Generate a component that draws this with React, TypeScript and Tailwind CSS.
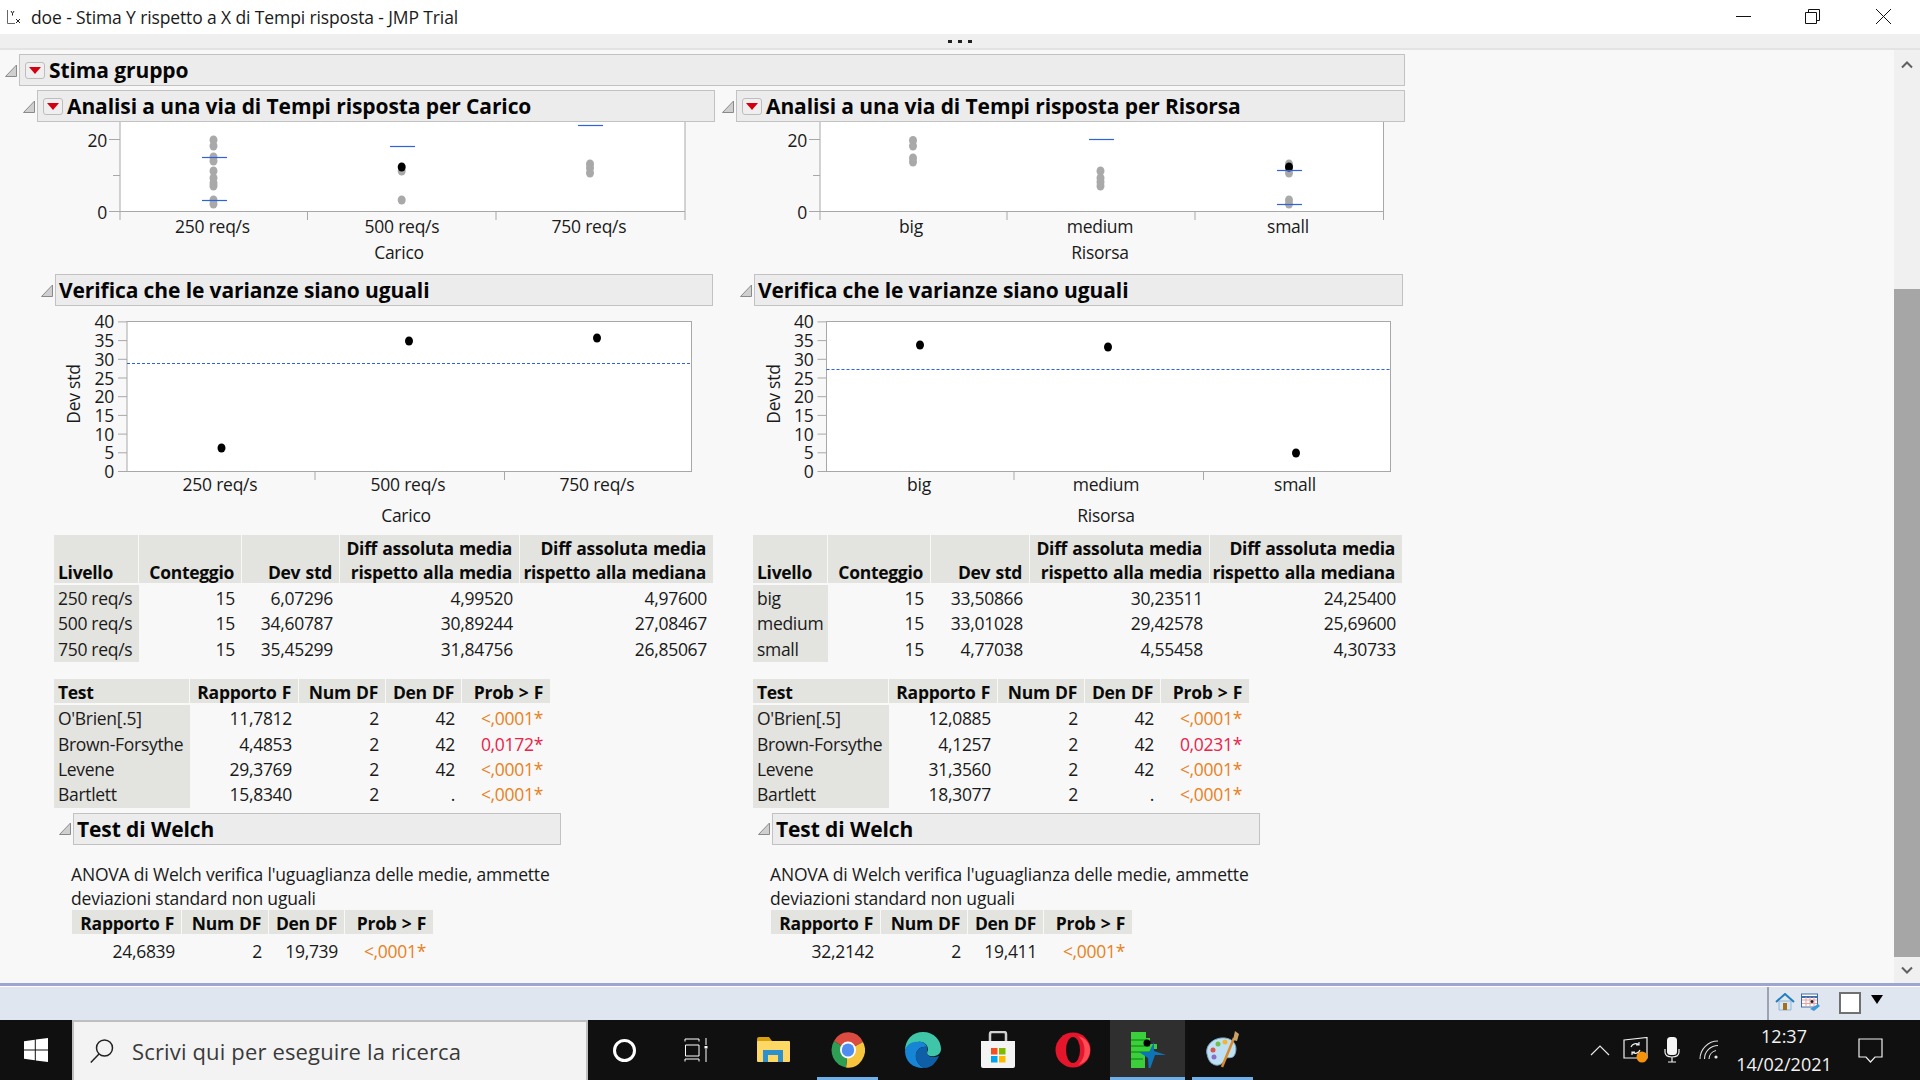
import React from 'react';

const FONT = "'Open Sans', 'Noto Sans', sans-serif";

type Marker = { x: number; y: number };
type Bar = { x1: number; x2: number; y: number };

const Disclosure = () => (
  <svg width="12" height="13" viewBox="0 0 12 13" className="shrink-0 mr-[2px]">
    <path d="M11.5 1 V12.5 H0.5 Z" fill="#cfcfcf" stroke="#8a8a8a" strokeWidth="1" />
  </svg>
);

const RedMenu = () => (
  <div className="w-[20px] h-[17px] shrink-0 mr-[4px] ml-[5px] rounded-[3px] border border-[#bdbdbd] bg-[#efefef] flex items-center justify-center">
    <svg width="12" height="7" viewBox="0 0 12 7">
      <path d="M0 0 H12 L6 7 Z" fill="#d40010" />
    </svg>
  </div>
);

const Header = ({ title, width, menu, className }: { title: string; width: string; menu?: boolean; className?: string }) => (
  <div className={`flex items-center ${className ?? ''}`}>
    <Disclosure />
    <div className={`h-[32px] ${width} flex items-center border border-[#c2c2c2] bg-[#ececec] text-[21px] font-bold text-[#050505] tracking-[-0.1px]`}>
      {menu && <RedMenu />}
      <span className={menu ? 'pt-[2px]' : 'ml-[3px] pt-[2px]'}>{title}</span>
    </div>
  </div>
);

const ScatterPlot = ({ x0, left, right, ticks, labels, labelX, axisName, axisX, gray, black, bars }: {
  x0: number; left: number; right: number; ticks: number[]; labels: string[]; labelX: number[];
  axisName: string; axisX: number; gray: Marker[]; black: Marker[]; bars: Bar[];
}) => (
  <svg width="699" height="144" viewBox={`${x0} 122 699 144`} className="block tracking-[-0.25px]" fontFamily={FONT} fontSize="17.5" fill="#1a1a1a">
    <rect x={left} y="122" width={right - left} height="89" fill="#fff" />
    <path d={`M${left} 122 V220 M${right} 122 V220 M${left} 211.5 H${right} M${ticks[0]} 211 V220 M${ticks[1]} 211 V220 M${left - 11} 139.5 H${left} M${left - 7} 175.5 H${left} M${left - 11} 211.5 H${left}`} stroke="#a8a8a8" strokeWidth="1" fill="none" />
    {gray.map((p, i) => <ellipse key={i} cx={p.x} cy={p.y} rx="4" ry="4.5" fill="#a9a9a9" />)}
    {black.map((p, i) => <ellipse key={i} cx={p.x} cy={p.y} rx="4" ry="4.5" fill="#000" />)}
    {bars.map((b, i) => <line key={i} x1={b.x1} x2={b.x2} y1={b.y} y2={b.y} stroke="#2f62e0" strokeWidth="1.2" />)}
    <text x={left - 13} y="147" textAnchor="end">20</text>
    <text x={left - 13} y="219" textAnchor="end">0</text>
    {labels.map((l, i) => <text key={l} x={labelX[i]} y="233" textAnchor="middle">{l}</text>)}
    <text x={axisX} y="258.5" textAnchor="middle">{axisName}</text>
  </svg>
);

const DevPlot = ({ x0, left, right, ticks, labels, labelX, axisName, axisX, points, dashY }: {
  x0: number; left: number; right: number; ticks: number[]; labels: string[]; labelX: number[];
  axisName: string; axisX: number; points: Marker[]; dashY: number;
}) => {
  const yTicks = [0, 5, 10, 15, 20, 25, 30, 35, 40];
  return (
    <svg width="699" height="229" viewBox={`${x0} 306 699 229`} className="block tracking-[-0.25px]" fontFamily={FONT} fontSize="17.5" fill="#1a1a1a">
      <rect x={left} y="321.5" width={right - left} height="150" fill="#fff" stroke="#a8a8a8" />
      {yTicks.map(t => {
        const y = 471.5 - t * 3.74;
        return (
          <g key={t}>
            <line x1={left - 9} x2={left} y1={y} y2={y} stroke="#a8a8a8" />
            <text x={left - 13} y={y + 6.5} textAnchor="end">{t}</text>
          </g>
        );
      })}
      <path d={`M${ticks[0]} 471 V480 M${ticks[1]} 471 V480`} stroke="#a8a8a8" />
      <line x1={left} x2={right} y1={dashY} y2={dashY} stroke="#2f62e0" strokeWidth="1.2" strokeDasharray="3 2" />
      {points.map((p, i) => <ellipse key={i} cx={p.x} cy={p.y} rx="4" ry="4.5" fill="#000" />)}
      {labels.map((l, i) => <text key={l} x={labelX[i]} y="491" textAnchor="middle">{l}</text>)}
      <text x={axisX} y="522" textAnchor="middle">{axisName}</text>
      <text x={left - 53} y="394" textAnchor="middle" transform={`rotate(-90 ${left - 53} 394)`} dy="6">Dev std</text>
    </svg>
  );
};

const DataTable = ({ cols, head, rows, headHeight, rowHeight, firstGray = true, probCol }: {
  cols: string; head: React.ReactNode[]; rows: string[][]; headHeight: string; rowHeight: string; firstGray?: boolean; probCol?: number;
}) => (
  <div className="text-[17.5px] text-[#1a1a1a] tracking-[-0.3px]">
    <div className={`grid ${cols} gap-x-[1px] ${headHeight}`}>
      {head.map((h, i) => (
        <div key={i} className={`bg-[#e3e3df] font-bold text-[#0a0a0a] leading-[24px] flex items-end [word-spacing:1px] whitespace-nowrap ${i === 0 && firstGray ? 'justify-start pl-[4px]' : 'justify-end text-right pr-[7px]'}`}>
          <span className="translate-y-[1px]">{h}</span>
        </div>
      ))}
    </div>
    <div className="mt-[2px]">
      {rows.map((r, ri) => (
        <div key={ri} className={`grid ${cols} gap-x-[1px] ${rowHeight}`}>
          {r.map((c, i) => {
            const isProb = i === probCol;
            const color = isProb ? (c.startsWith('<') ? 'text-[#e8811c]' : 'text-[#e8234a]') : '';
            return (
              <div key={i} className={`flex items-center whitespace-nowrap ${i === 0 && firstGray ? 'bg-[#e3e3df] justify-start pl-[4px] -mr-[1px]' : `justify-end ${isProb ? 'pr-[7px]' : 'pr-[6px]'}`} ${color}`}>
                {c}
              </div>
            );
          })}
        </div>
      ))}
    </div>
  </div>
);

type ColumnProps = {
  x0: number;
  title: string;
  subWidth: string;
  verWidth: string;
  levelCols: string;
  scatter: React.ComponentProps<typeof ScatterPlot>;
  dev: React.ComponentProps<typeof DevPlot>;
  levels: string[][];
  tests: string[][];
  welch: string[];
};

const LEVEL_HEAD = ['Livello', 'Conteggio', 'Dev std',
  <>Diff assoluta media<br />rispetto alla media</>,
  <>Diff assoluta media<br />rispetto alla mediana</>];

const OnewayColumn = ({ title, subWidth, verWidth, levelCols, scatter, dev, levels, tests, welch }: ColumnProps) => (
  <div className="w-[699px] shrink-0">
    <Header title={title} width={subWidth} menu />
    <ScatterPlot {...scatter} />
    <Header title="Verifica che le varianze siano uguali" width={verWidth} className="mt-[8px] ml-[18px]" />
    <DevPlot {...dev} />
    <div className="ml-[31px]">
      <DataTable cols={levelCols} head={LEVEL_HEAD} rows={levels} headHeight="h-[48px]" rowHeight="h-[25.4px]" />
      <div className="mt-[18px]">
        <DataTable
          cols="grid-cols-[135px_108px_86px_75px_88px]"
          head={['Test', 'Rapporto F', 'Num DF', 'Den DF', 'Prob > F']}
          rows={tests}
          headHeight="h-[24px]"
          rowHeight="h-[25.4px]"
          probCol={4}
        />
      </div>
    </div>
    <Header title="Test di Welch" width="w-[488px]" className="mt-[6px] ml-[36px]" />
    <p className="ml-[48px] mt-[17px] w-[500px] text-[17.5px] leading-[24px] text-[#1a1a1a] tracking-[-0.18px]">
      ANOVA di Welch verifica l'uguaglianza delle medie, ammette deviazioni standard non uguali
    </p>
    <div className="ml-[49px]">
      <DataTable
        cols="grid-cols-[109px_86px_75px_88px]"
        head={['Rapporto F', 'Num DF', 'Den DF', 'Prob > F']}
        rows={[welch]}
        headHeight="h-[24px]"
        rowHeight="h-[31px]"
        firstGray={false}
        probCol={3}
      />
    </div>
  </div>
);

const carico: ColumnProps = {
  x0: 23,
  title: 'Analisi a una via di Tempi risposta per Carico',
  subWidth: 'w-[678px]',
  verWidth: 'w-[658px]',
  levelCols: 'grid-cols-[84px_102px_97px_179px_193px]',
  scatter: {
    x0: 23, left: 120, right: 685, ticks: [307.5, 496], labels: ['250 req/s', '500 req/s', '750 req/s'], labelX: [212.5, 402, 589],
    axisName: 'Carico', axisX: 399,
    gray: [140, 146, 157, 161, 171, 178, 183, 186, 200, 204].map(y => ({ x: 213.5, y }))
      .concat([171, 200].map(y => ({ x: 401.7, y })))
      .concat([164, 168, 173].map(y => ({ x: 590, y }))),
    black: [{ x: 401.7, y: 167 }],
    bars: [{ x1: 202, x2: 227, y: 157.5 }, { x1: 202, x2: 227, y: 200.5 }, { x1: 390, x2: 415, y: 146.5 }, { x1: 578, x2: 603, y: 125.5 }],
  },
  dev: {
    x0: 23, left: 127, right: 691.5, ticks: [315, 504.5], labels: ['250 req/s', '500 req/s', '750 req/s'], labelX: [220, 408, 597],
    axisName: 'Carico', axisX: 406, dashY: 363.5,
    points: [{ x: 221.5, y: 448 }, { x: 409, y: 341 }, { x: 597, y: 338 }],
  },
  levels: [
    ['250 req/s', '15', '6,07296', '4,99520', '4,97600'],
    ['500 req/s', '15', '34,60787', '30,89244', '27,08467'],
    ['750 req/s', '15', '35,45299', '31,84756', '26,85067'],
  ],
  tests: [
    ["O'Brien[.5]", '11,7812', '2', '42', '<,0001*'],
    ['Brown-Forsythe', '4,4853', '2', '42', '0,0172*'],
    ['Levene', '29,3769', '2', '42', '<,0001*'],
    ['Bartlett', '15,8340', '2', '.', '<,0001*'],
  ],
  welch: ['24,6839', '2', '19,739', '<,0001*'],
};

const risorsa: ColumnProps = {
  x0: 722,
  title: 'Analisi a una via di Tempi risposta per Risorsa',
  subWidth: 'w-[669px]',
  verWidth: 'w-[649px]',
  levelCols: 'grid-cols-[74px_102px_98px_179px_192px]',
  scatter: {
    x0: 722, left: 820, right: 1383.5, ticks: [1007, 1195], labels: ['big', 'medium', 'small'], labelX: [911, 1100, 1288],
    axisName: 'Risorsa', axisX: 1100,
    gray: [140.5, 146, 158, 162].map(y => ({ x: 913, y }))
      .concat([171, 178, 182, 186].map(y => ({ x: 1100.5, y })))
      .concat([164, 168, 173, 200, 204].map(y => ({ x: 1289, y }))),
    black: [{ x: 1289, y: 167 }],
    bars: [{ x1: 1089, x2: 1114, y: 139.5 }, { x1: 1277, x2: 1302, y: 170.5 }, { x1: 1277, x2: 1302, y: 204.5 }],
  },
  dev: {
    x0: 722, left: 826.5, right: 1390.5, ticks: [1014, 1203.5], labels: ['big', 'medium', 'small'], labelX: [919, 1106, 1295],
    axisName: 'Risorsa', axisX: 1106, dashY: 369.5,
    points: [{ x: 920, y: 345 }, { x: 1108, y: 347 }, { x: 1296, y: 453 }],
  },
  levels: [
    ['big', '15', '33,50866', '30,23511', '24,25400'],
    ['medium', '15', '33,01028', '29,42578', '25,69600'],
    ['small', '15', '4,77038', '4,55458', '4,30733'],
  ],
  tests: [
    ["O'Brien[.5]", '12,0885', '2', '42', '<,0001*'],
    ['Brown-Forsythe', '4,1257', '2', '42', '0,0231*'],
    ['Levene', '31,3560', '2', '42', '<,0001*'],
    ['Bartlett', '18,3077', '2', '.', '<,0001*'],
  ],
  welch: ['32,2142', '2', '19,411', '<,0001*'],
};

const TitleBar = () => (
  <div className="h-[34px] bg-white flex items-center shrink-0">
    <svg width="16" height="16" viewBox="0 0 16 16" className="ml-[6px]" fill="none">
      <path d="M1.5 1 V14.5 H9" stroke="#666" strokeWidth="1" />
      <path d="M5 2 L6.5 4.5 L8 2 M6.5 4.5 V6.5" stroke="#222" strokeWidth="1" />
      <path d="M10 10 L14 14 M14 10 L10 14" stroke="#222" strokeWidth="1" />
    </svg>
    <span className="ml-[9px] text-[17.5px] text-[#1a1a1a] tracking-[-0.12px]">doe - Stima Y rispetto a X di Tempi risposta - JMP Trial</span>
    <div className="ml-auto flex items-center">
      <svg width="184" height="16" viewBox="0 0 184 16" fill="none" stroke="#111" strokeWidth="1">
        <path d="M0 7.5 H15" />
        <path d="M69.5 3.5 H80.5 V14.5 H69.5 Z M72.5 3.5 V0.5 H83.5 V11.5 H80.5" />
        <path d="M140 0 L155 15 M155 0 L140 15" />
      </svg>
    </div>
  </div>
);

const DotBar = () => (
  <div className="h-[16px] bg-[#efefef] border-b-2 border-[#e3e3e3] flex items-center justify-center gap-[6px] shrink-0">
    <span className="w-[4px] h-[3px] bg-[#222]" />
    <span className="w-[4px] h-[3px] bg-[#222]" />
    <span className="w-[4px] h-[3px] bg-[#222]" />
  </div>
);

const Scrollbar = () => (
  <div className="w-[26px] shrink-0 bg-[#f0f0f0] flex flex-col items-center">
    <svg width="12" height="8" viewBox="0 0 12 8" className="mt-[11px] shrink-0" fill="none">
      <path d="M1 6.5 L6 1.5 L11 6.5" stroke="#606060" strokeWidth="2" />
    </svg>
    <div className="mt-[220px] w-full h-[668px] bg-[#a6a6a6] shrink-0" />
    <svg width="12" height="8" viewBox="0 0 12 8" className="mt-[9px] shrink-0" fill="none">
      <path d="M1 1.5 L6 6.5 L11 1.5" stroke="#606060" strokeWidth="2" />
    </svg>
  </div>
);

const StatusBar = () => (
  <div className="h-[37px] shrink-0 border-t-[3px] border-[#9da6d0] bg-[#e0e6f0] flex justify-end">
    <div className="w-full border-t border-white flex justify-end">
      <div className="w-[153px] border-l-2 border-[#9ba3b5] flex items-start pt-[6px]">
        <svg width="20" height="18" viewBox="0 0 20 18" className="ml-[6px]">
          <path d="M4 8 V17 H16 V8 Z" fill="#d5e7f5" stroke="#8fb6d6" />
          <path d="M1 9 L10 1 L19 9" fill="none" stroke="#1f7fbf" strokeWidth="2" />
          <rect x="8" y="10" width="4" height="7" fill="#a5701c" />
        </svg>
        <svg width="19" height="18" viewBox="0 0 19 18" className="ml-[6px]">
          <rect x="0.5" y="1" width="16" height="13" fill="#fff" stroke="#3a6ea8" />
          <path d="M0.5 4 H16.5" stroke="#3a6ea8" strokeWidth="2" />
          <path d="M1 7 H16 M1 10.5 H16 M5 4 V14 M9 4 V14 M13 4 V14" stroke="#e8a0a0" strokeWidth="1" />
          <circle cx="11" cy="8.5" r="1.5" fill="#222" />
          <path d="M9 16 L17 11 L19 13 L13 18 Z" fill="#3d9ad6" />
        </svg>
        <div className="ml-[19px] -mt-[1px] w-[22px] h-[22px] border-2 border-[#707070] bg-white" />
        <svg width="12" height="10" viewBox="0 0 12 10" className="ml-[10px] mt-[2px]">
          <path d="M0 0 H12 L6 9 Z" fill="#000" />
        </svg>
      </div>
    </div>
  </div>
);

const Chrome = () => (
  <svg width="34" height="36" viewBox="0 0 34 36">
    <path d="M17 18 L3 9 A16.5 17.5 0 0 1 32 10 Z" fill="#db4b3f" />
    <path d="M17 18 L32 10 A16.5 17.5 0 0 1 15 35.5 Z" fill="#f6c53d" />
    <path d="M17 18 L15 35.5 A16.5 17.5 0 0 1 3 9 Z" fill="#2e9e55" />
    <ellipse cx="17" cy="18" rx="8" ry="8.5" fill="#fff" />
    <ellipse cx="17" cy="18" rx="6.2" ry="6.6" fill="#4f8ef0" />
  </svg>
);

const Edge = () => (
  <svg width="38" height="38" viewBox="0 0 38 38">
    <path d="M1 20 C1 8 9 1 19 1 C30 1 37 9 37 18 C37 24 31 26 26 25 C22 24 23 21 24 19 C24 13 19 10 14 11 C7 12 2 16 1 20 Z" fill="#3fc6a8" />
    <path d="M1 20 C2 14 8 10 14 11 C19 10 22 13 23 16 C16 15 11 20 12 27 C13 32 17 36 21 37 C10 38 1 31 1 20 Z" fill="#1685d5" />
    <path d="M12 27 C11 20 16 15 23 16 C24 18 22 22 24 24 C26 27 32 26 35 25 C32 32 27 37 21 37 C17 36 13 32 12 27 Z" fill="#0f5ea8" />
  </svg>
);

const Store = () => (
  <svg width="36" height="38" viewBox="0 0 36 38">
    <path d="M10 10 V3 Q10 1 12 1 H24 Q26 1 26 3 V10" fill="none" stroke="#cfcfcf" strokeWidth="2.5" />
    <path d="M1 10 H35 V35 Q35 37 33 37 H3 Q1 37 1 35 Z" fill="#f4f4f4" />
    <rect x="11" y="17" width="6.5" height="6.5" fill="#f25022" />
    <rect x="19" y="17" width="6.5" height="6.5" fill="#7fba00" />
    <rect x="11" y="25" width="6.5" height="6.5" fill="#00a4ef" />
    <rect x="19" y="25" width="6.5" height="6.5" fill="#ffb900" />
  </svg>
);

const Explorer = () => (
  <svg width="34" height="26" viewBox="0 0 34 26">
    <path d="M1 2 Q1 0 3 0 H13 L16 4 H33 V7 H1 Z" fill="#d69f0e" />
    <rect x="1" y="4" width="33" height="21" rx="1" fill="#fdd864" />
    <path d="M7 25 V13 H27 V25 H22 V18 H12 V25 Z" fill="#2d8fcb" />
  </svg>
);

const Opera = () => (
  <svg width="36" height="36" viewBox="0 0 36 36">
    <ellipse cx="18" cy="18" rx="17.5" ry="17.5" fill="#e5152b" />
    <ellipse cx="18" cy="18" rx="7" ry="13" fill="#101010" />
    <path d="M23 4 C31 6 35 12 35 18 C35 25 31 31 23 33 C28 29 29.5 23 29.5 18 C29.5 13 28 8 23 4 Z" fill="#ff4b55" />
  </svg>
);

const Jmp = () => (
  <svg width="36" height="36" viewBox="0 0 36 36">
    <path d="M1 0 H16 V6 H20 V12 H27 V17 H24 V24 H15 V36 H1 Z" fill="#3ccf3c" />
    <path d="M1 8 H17 M1 14 H20 M1 20 H20 M1 27 H13" stroke="#1a9a1a" strokeWidth="1.5" />
    <circle cx="17" cy="11" r="3.5" fill="#000" />
    <path d="M9 20 H19 L24 10 L24 19 L36 23 L25 23 L19 40 L18 26 Z" fill="#0f74b5" />
  </svg>
);

const Paint = () => (
  <svg width="36" height="40" viewBox="0 0 36 40">
    <path d="M2 24 C0 14 10 7 20 8 C29 9 33 16 30 24 C28 30 22 26 20 29 C18 34 13 37 8 34 C4 32 3 28 2 24 Z" fill="#bfe0f2" stroke="#7aa9c6" />
    <circle cx="8" cy="20" r="2.5" fill="#d9534f" />
    <circle cx="13" cy="14" r="2.5" fill="#6fbf4b" />
    <circle cx="20" cy="12" r="2.5" fill="#f2b632" />
    <circle cx="9" cy="27" r="2.5" fill="#8a6fc9" />
    <path d="M17 37 L29 8" stroke="#d98a2b" strokeWidth="2.5" />
    <path d="M28 10 L30 1 L34 4 L32 11 Z" fill="#c9a26a" />
  </svg>
);

const TaskCell = ({ children, width = 'w-[75px]', underline, active }: { children: React.ReactNode; width?: string; underline?: boolean; active?: boolean }) => (
  <div className={`relative h-full ${width} flex items-center justify-center shrink-0 ${active ? 'bg-[#2f2f2f]' : ''}`}>
    {children}
    {underline && <div className={`absolute bottom-0 h-[3px] bg-[#6fb0e8] ${active ? 'left-0 right-0' : 'left-[7px] right-[7px]'}`} />}
  </div>
);

const Taskbar = () => (
  <div className="h-[60px] shrink-0 bg-[#101010] flex items-stretch">
    <div className="w-[72px] flex items-center justify-center shrink-0">
      <svg width="24" height="24" viewBox="0 0 24 24" fill="#fff">
        <path d="M0 3.3 L10.8 1.8 V11.4 H0 Z M11.8 1.6 L24 0 V11.4 H11.8 Z M0 12.5 H10.8 V22.2 L0 20.7 Z M11.8 12.5 H24 V24 L11.8 22.4 Z" />
      </svg>
    </div>
    <div className="w-[516px] bg-[#f3f3f3] border-2 border-[#bfbfbf] border-b-0 flex items-center shrink-0">
      <svg width="24" height="24" viewBox="0 0 24 24" className="ml-[16px]" fill="none" stroke="#222" strokeWidth="1.5">
        <circle cx="14.5" cy="9" r="8" />
        <path d="M9 15 L0.8 23.5" />
      </svg>
      <span className="ml-[18px] text-[22px] text-[#3a3a3a] tracking-[0.15px]">Scrivi qui per eseguire la ricerca</span>
    </div>
    <TaskCell width="w-[72px]">
      <div className="w-[23px] h-[23px] rounded-full border-[3px] border-white" />
    </TaskCell>
    <TaskCell>
      <svg width="24" height="24" viewBox="0 0 24 24" fill="none" stroke="#fff" strokeWidth="1" className="mr-[3px]">
        <path d="M1 3.5 V1 H15 V3.5 M1.5 7 H15 V18 H1.5 Z M1 23.5 V21 H15 V23.5 M22 0 V7 M22 11 V24" />
        <rect x="20.5" y="8" width="3" height="2.5" fill="#fff" stroke="none" />
      </svg>
    </TaskCell>
    <TaskCell><Explorer /></TaskCell>
    <TaskCell underline><Chrome /></TaskCell>
    <TaskCell><Edge /></TaskCell>
    <TaskCell><Store /></TaskCell>
    <TaskCell><Opera /></TaskCell>
    <TaskCell underline active><Jmp /></TaskCell>
    <TaskCell underline><Paint /></TaskCell>
    <div className="ml-auto flex items-center text-white">
      <svg width="20" height="11" viewBox="0 0 20 11" fill="none" stroke="#e8e8e8" strokeWidth="1.2">
        <path d="M1 10 L10 1 L19 10" />
      </svg>
      <svg width="28" height="26" viewBox="0 0 28 26" fill="none" stroke="#f0f0f0" strokeWidth="1.2" className="ml-[13.5px]">
        <path d="M1 3 L24 0.5 V21 L1 21 Z" />
        <path d="M8 10 A5 5 0 0 1 16 8 M16 5 V8 H13 M17 13 A5 5 0 0 1 9 15 M9 18 V15 H12" />
        <circle cx="19" cy="20" r="5.5" fill="#f5930a" stroke="none" />
      </svg>
      <svg width="16" height="26" viewBox="0 0 16 26" fill="none" stroke="#f0f0f0" strokeWidth="1.2" className="ml-[12.5px]">
        <rect x="3" y="0" width="10" height="18" rx="3.5" fill="#f5f5f5" stroke="none" />
        <path d="M1 12 V15 Q1 20 8 20 Q15 20 15 15 V12 M8 20 V25 M4 25 H12" />
      </svg>
      <svg width="22" height="20" viewBox="0 0 22 20" fill="none" stroke="#dcdcdc" strokeWidth="1.1" className="ml-[19.5px]">
        <path d="M1 19 A18 18 0 0 1 19 1 M5.5 19 A13.5 13.5 0 0 1 19 5.5 M10 19 A9 9 0 0 1 17 10.5" />
        <circle cx="17" cy="17" r="1.6" fill="#e8e8e8" stroke="none" />
      </svg>
      <div className="w-[110px] ml-[8px] text-[18px] leading-[28px] text-center text-[#f2f2f2]">
        <div>12:37</div>
        <div>14/02/2021</div>
      </div>
      <svg width="25" height="25" viewBox="0 0 25 25" fill="none" stroke="#f0f0f0" strokeWidth="1.2" className="ml-[19px] mr-[37px]">
        <path d="M1 1 H24 V19 H17 L12.5 24 L8 19 H1 Z" />
      </svg>
    </div>
  </div>
);

export default function App() {
  return (
    <div className="w-[1920px] h-[1080px] flex flex-col overflow-hidden bg-[#f8f8f8]" style={{ fontFamily: FONT }}>
      <TitleBar />
      <DotBar />
      <div className="flex-1 flex min-h-0">
        <main className="flex-1 min-w-0 pl-[5px] pt-[4px]">
          <Header title="Stima gruppo" width="w-[1386px]" menu />
          <div className="flex mt-[4px] ml-[18px]">
            <OnewayColumn {...carico} />
            <OnewayColumn {...risorsa} />
          </div>
        </main>
        <Scrollbar />
      </div>
      <StatusBar />
      <Taskbar />
    </div>
  );
}
